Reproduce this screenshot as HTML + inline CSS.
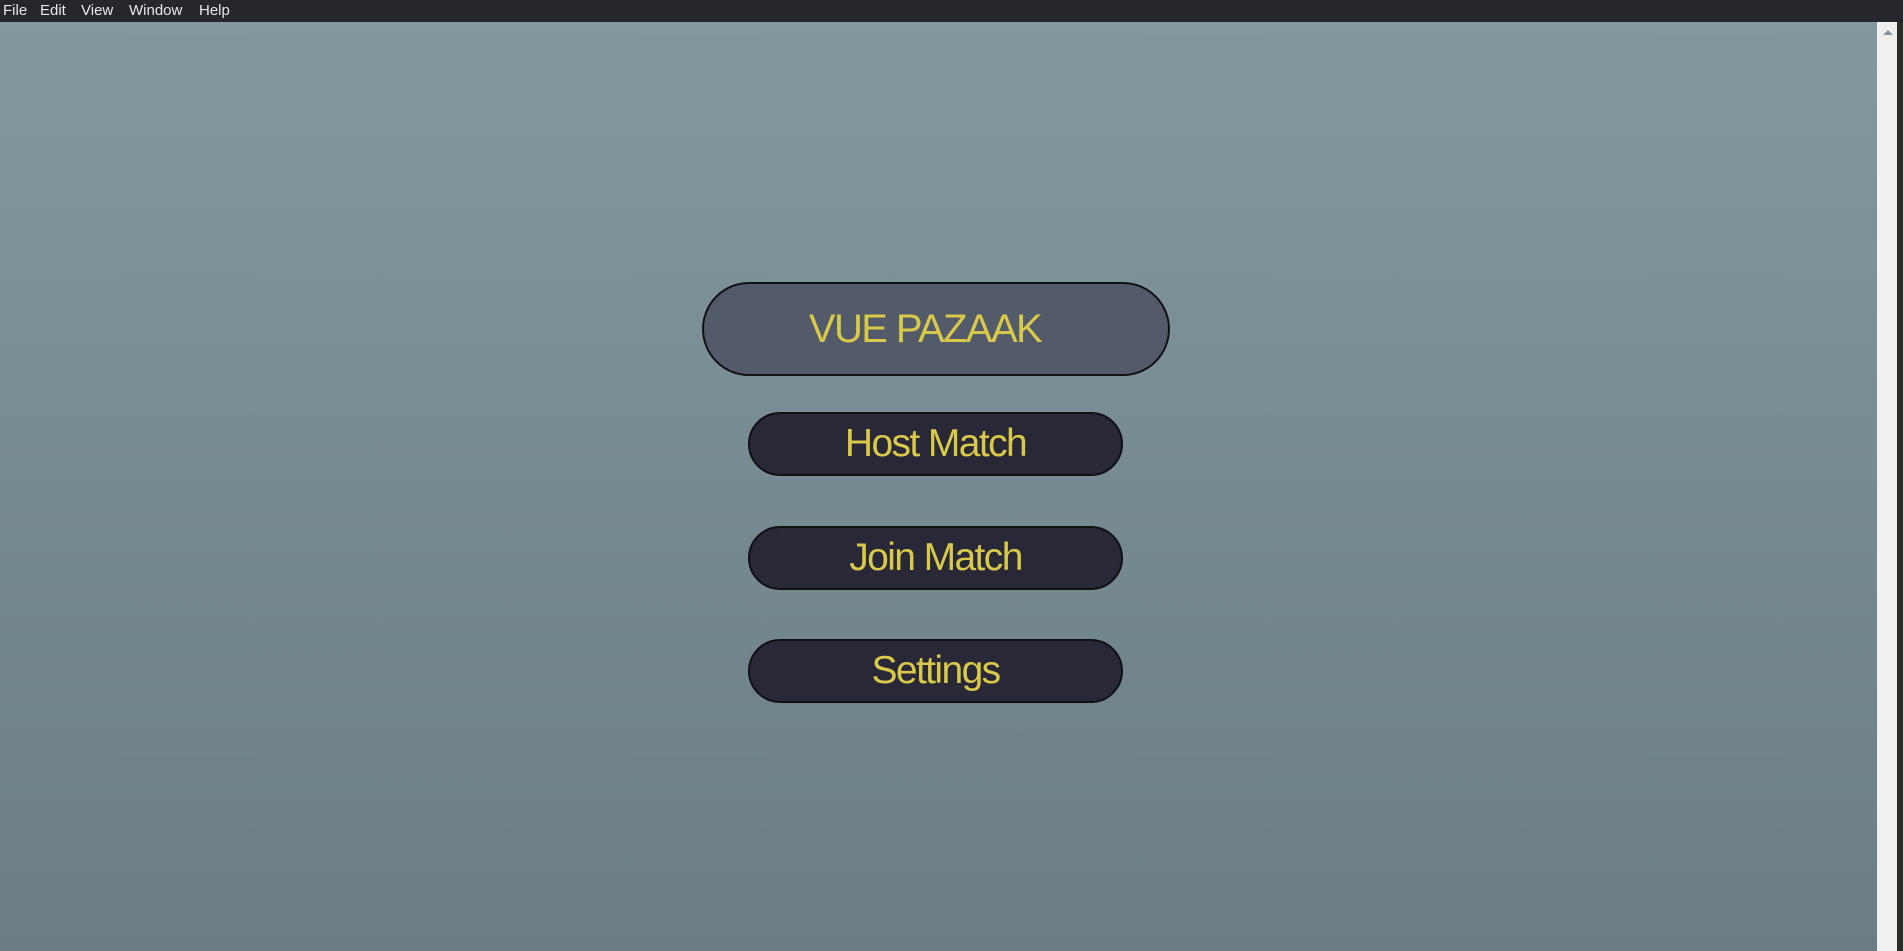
<!DOCTYPE html>
<html><head><style>
body{margin:0;width:1903px;height:951px;overflow:hidden;font-family:"Liberation Sans",Arial,sans-serif;position:relative;background:#25272c}
.menu{position:absolute;left:0;top:0;width:1903px;height:22px;background:#25272c;color:#e8e8e8;font-size:15px}
.menu span{position:absolute;top:2px}
.main{position:absolute;left:0;top:22px;width:1877px;height:929px;background:linear-gradient(#83989f,#6a7d84)}
.sb{position:absolute;left:1877px;top:22px;width:20px;height:929px;background:#f0f0f0}
.sb:after{content:"";position:absolute;left:6px;top:8px;border-left:5px solid transparent;border-right:5px solid transparent;border-bottom:5px solid #80959c}
.edge{position:absolute;left:1897px;top:22px;width:6px;height:929px;background:#2b2b27}
.b{position:absolute;box-sizing:border-box;border:2px solid #111;color:#d8c94a;display:flex;align-items:center;justify-content:center;font-size:39px;letter-spacing:-1.6px}
.t{left:702px;top:282px;width:468px;height:94px;border-radius:47px;background:#535a69;font-size:40px;padding-right:22px}
.h{left:748px;width:375px;height:64px;border-radius:32px;background:#282837}
</style></head><body>
<div class="menu"><span style="left:3px">File</span><span style="left:40px">Edit</span><span style="left:81px">View</span><span style="left:129px">Window</span><span style="left:199px">Help</span></div>
<div class="main"></div>
<div class="sb"></div><div class="edge"></div>
<div class="b t">VUE PAZAAK</div>
<div class="b h" style="top:412px">Host Match</div>
<div class="b h" style="top:526px">Join Match</div>
<div class="b h" style="top:639px">Settings</div>
</body></html>
